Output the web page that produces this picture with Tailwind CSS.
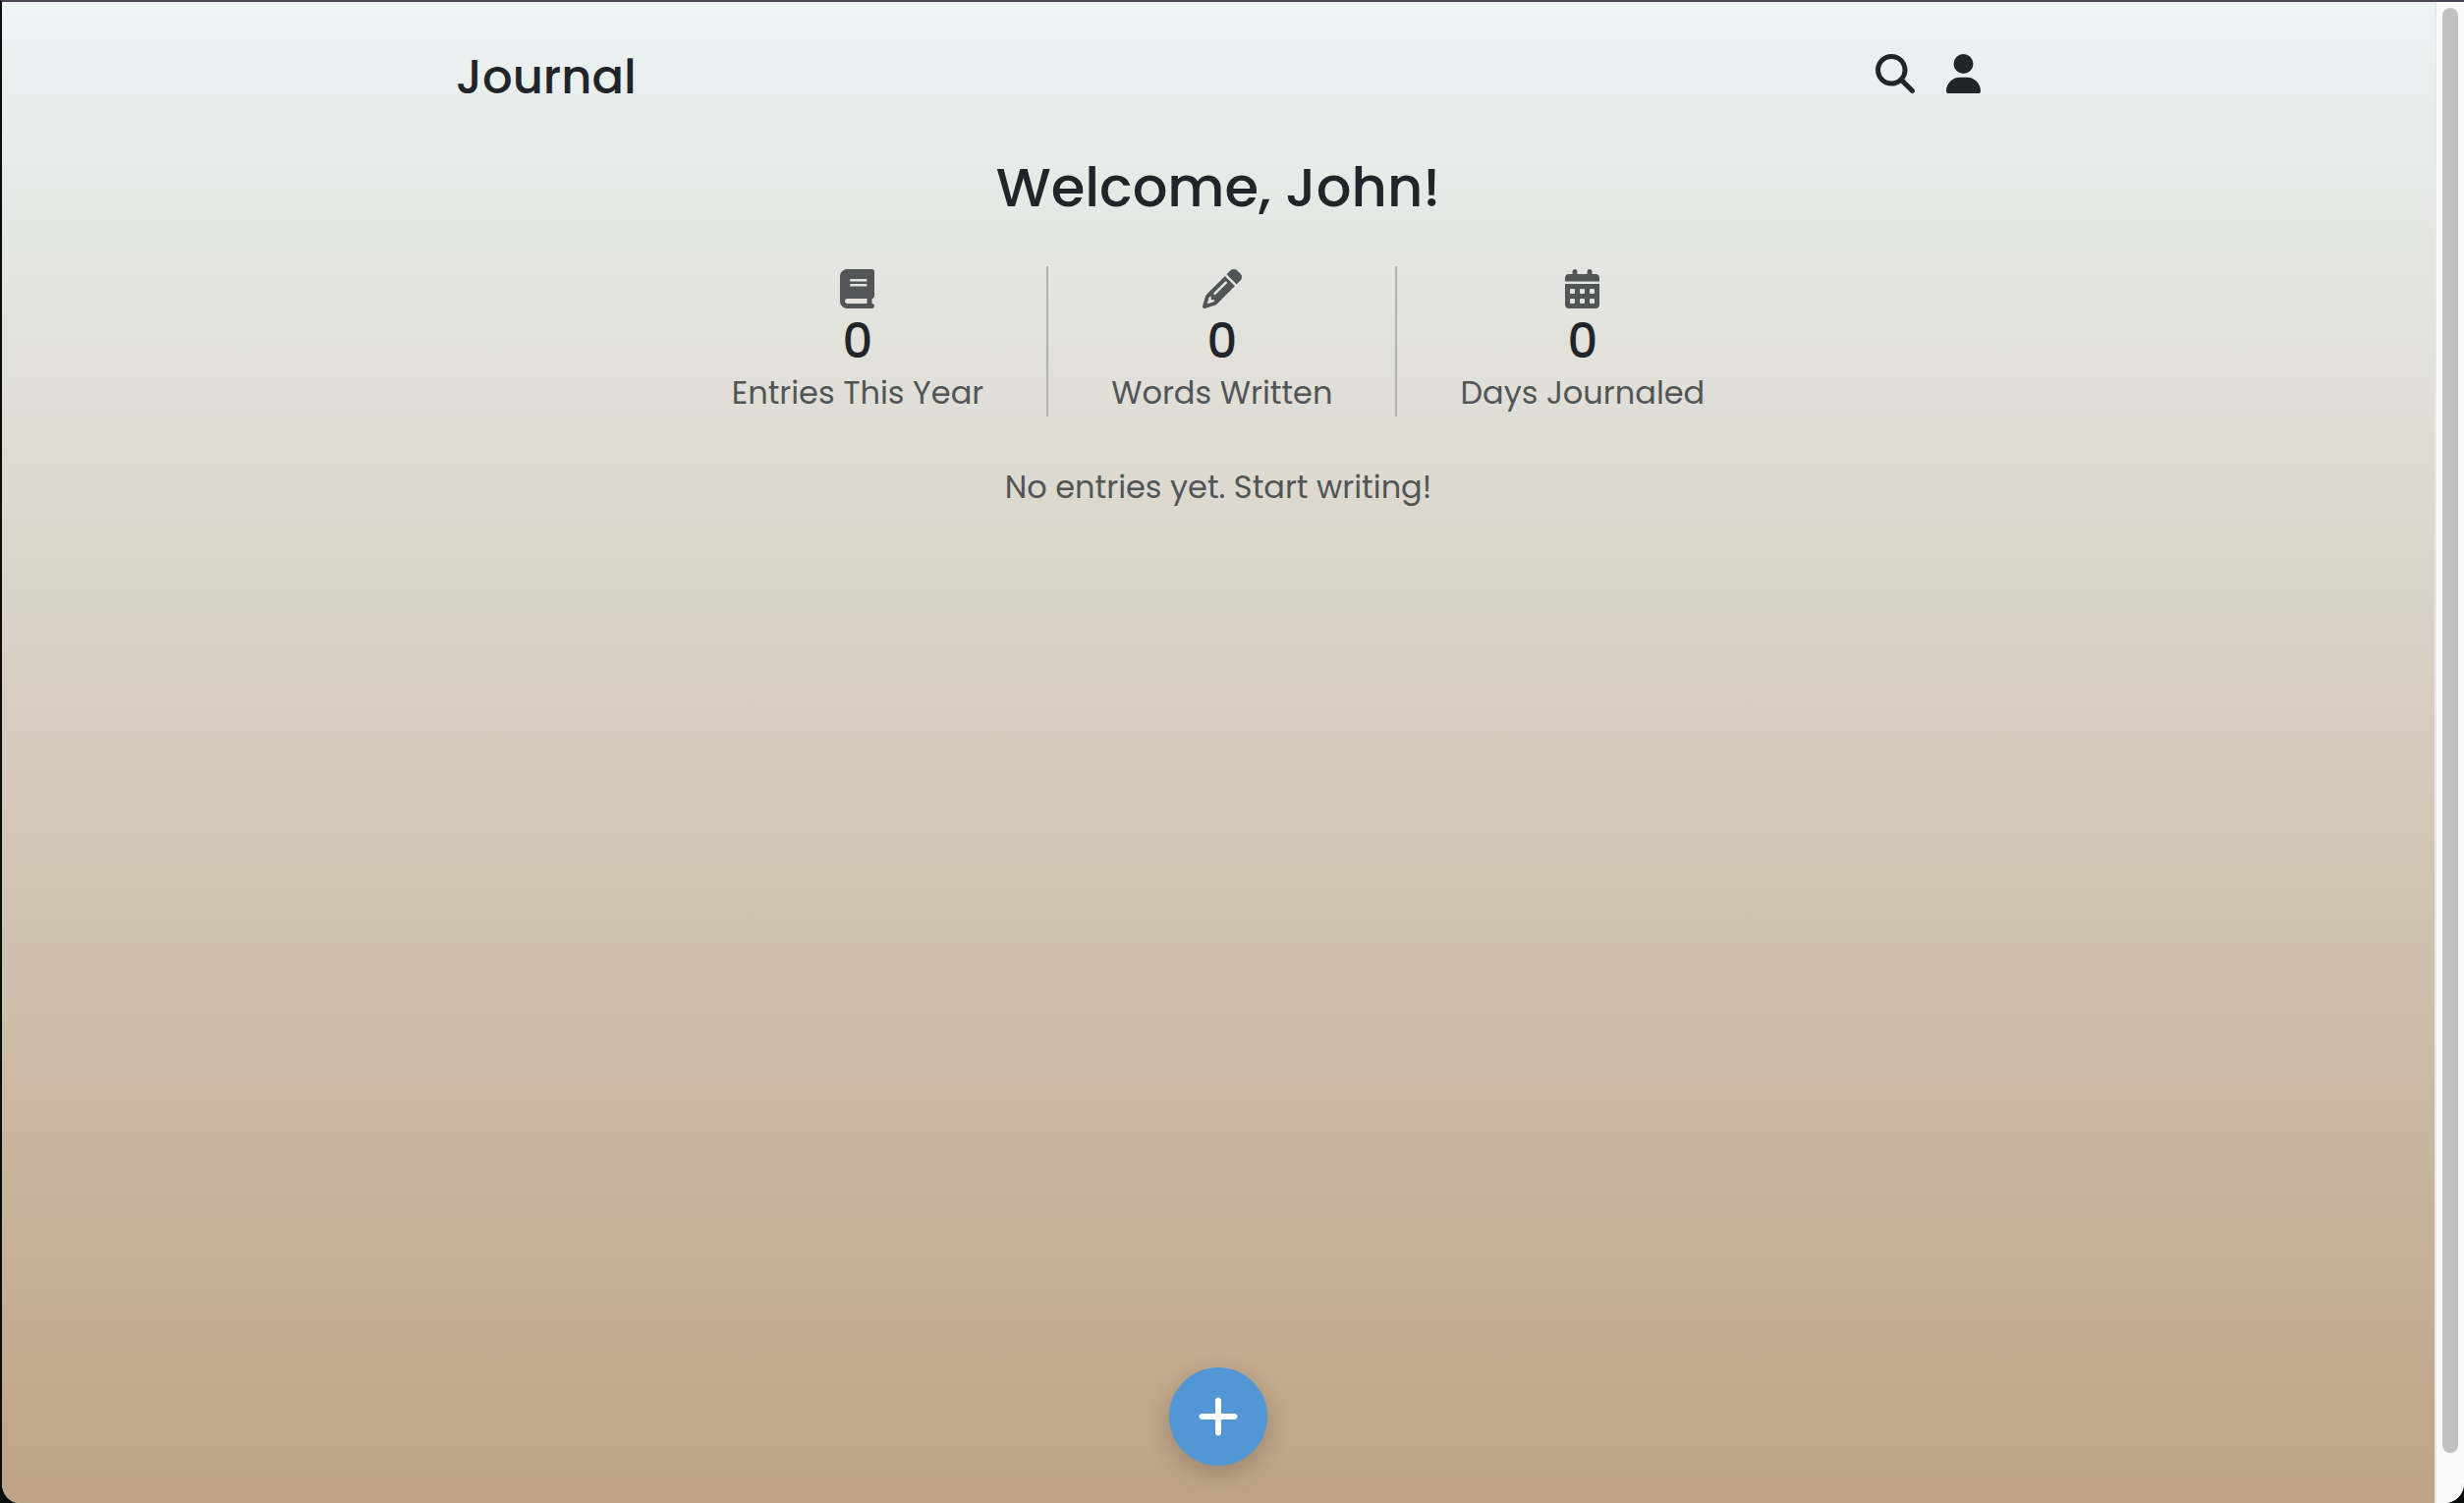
<!DOCTYPE html>
<html lang="en">
<head>
<meta charset="utf-8">
<meta name="viewport" content="width=device-width, initial-scale=1">
<title>Journal</title>
<script src="https://cdn.jsdelivr.net/npm/@tailwindcss/browser@4"></script>
</head>
<body class="bg-[#0b0d0d] font-['Poppins','Inter',sans-serif] text-[#212529]">
<div class="flex min-h-screen overflow-hidden rounded-b-[20px] border-t-2 border-l-2 border-t-[#484650] border-l-[#0b0d0d] bg-[#fafafa]">
  <div class="flex flex-1 flex-col items-center bg-linear-to-b from-[#ecf4f5] to-[#bea386]">
    <header class="flex w-full max-w-[1552px] items-center justify-between pt-[37px]">
      <a href="#" class="text-[48px] leading-[80px] font-medium">Journal</a>
      <nav class="-mt-2 flex items-center gap-8">
        <button type="button" aria-label="Search">
          <svg class="size-10" viewBox="0 0 512 512" fill="currentColor"><path d="M416 208c0 45.900-14.900 88.300-40 122.700L502.600 457.400c12.500 12.500 12.500 32.800 0 45.300s-32.800 12.500-45.300 0L330.700 376c-34.400 25.200-76.800 40-122.700 40C93.100 416 0 322.900 0 208S93.100 0 208 0S416 93.100 416 208zM208 352a144 144 0 1 0 0-288 144 144 0 1 0 0 288z"/></svg>
        </button>
        <button type="button" aria-label="Account">
          <svg class="h-10 w-[35px]" viewBox="0 0 448 512" fill="currentColor"><path d="M224 256A128 128 0 1 0 224 0a128 128 0 1 0 0 256zm-45.700 48C79.800 304 0 383.800 0 482.300C0 498.700 13.300 512 29.700 512H418.300c16.400 0 29.700-13.300 29.700-29.700C448 383.800 368.200 304 269.700 304H178.300z"/></svg>
        </button>
      </nav>
    </header>
    <main class="flex w-full flex-1 flex-col items-center">
      <h1 class="mt-8 text-[56px] leading-[80px] font-medium">Welcome, John!</h1>
      <section class="mt-10 flex text-center" aria-label="Statistics">
        <div class="flex h-[153px] flex-col items-center border-r-2 border-[#b1b1ad] px-16 pt-[3px]">
          <svg class="h-10 w-[35px] shrink-0 text-[#515556]" viewBox="0 0 448 512" fill="currentColor"><path d="M96 0C43 0 0 43 0 96V416c0 53 43 96 96 96H384h32c17.700 0 32-14.300 32-32s-14.300-32-32-32V384c17.700 0 32-14.300 32-32V32c0-17.700-14.300-32-32-32H384 96zm0 384H352v64H96c-17.700 0-32-14.300-32-32s14.300-32 32-32zm32-240c0-8.800 7.200-16 16-16H336c8.800 0 16 7.200 16 16s-7.200 16-16 16H144c-8.800 0-16-7.200-16-16zm16 48H336c8.800 0 16 7.200 16 16s-7.200 16-16 16H144c-8.800 0-16-7.200-16-16s7.200-16 16-16z"/></svg>
          <strong class="mt-1.5 text-[48px] leading-[56px] font-medium">0</strong>
          <span class="text-[32px] leading-[48px] text-[#515556]">Entries This Year</span>
        </div>
        <div class="flex h-[153px] flex-col items-center border-r-2 border-[#b1b1ad] px-16 pt-[3px]">
          <svg class="size-10 shrink-0 text-[#515556]" viewBox="0 0 512 512" fill="currentColor"><path d="M410.300 231l11.300-11.300-33.900-33.900-62.100-62.100L291.700 89.800l-11.300 11.300-22.600 22.600L58.600 322.900c-10.400 10.400-18 23.300-22.200 37.400L1 480.700c-2.500 8.400-.2 17.500 6.100 23.700s15.300 8.500 23.700 6.100l120.300-35.400c14.100-4.200 27-11.800 37.400-22.200L387.700 253.700 410.300 231zM160 399.400l-9.100 22.700c-4 3.100-8.500 5.400-13.300 6.900L59.400 452l23-78.100c1.400-4.900 3.800-9.400 6.900-13.300l22.700-9.100v32c0 8.800 7.200 16 16 16h32zM362.700 18.700L348.300 33.200 325.700 55.800 314.300 67.100l33.900 33.900 62.100 62.100 33.900 33.900 11.300-11.300 22.600-22.600 14.500-14.500c25-25 25-65.500 0-90.500L453.300 18.700c-25-25-65.500-25-90.500 0zm-47.400 168l-144 144c-6.200 6.200-16.400 6.200-22.600 0s-6.200-16.400 0-22.600l144-144c6.200-6.200 16.400-6.200 22.600 0s6.200 16.400 0 22.600z"/></svg>
          <strong class="mt-1.5 text-[48px] leading-[56px] font-medium">0</strong>
          <span class="text-[32px] leading-[48px] text-[#515556]">Words Written</span>
        </div>
        <div class="flex h-[153px] flex-col items-center px-16 pt-[3px]">
          <svg class="h-10 w-[35px] shrink-0 text-[#515556]" viewBox="0 0 448 512" fill="currentColor" fill-rule="evenodd"><path d="M128 0c17.700 0 32 14.300 32 32V64H288V32c0-17.700 14.300-32 32-32s32 14.300 32 32V64h48c26.500 0 48 21.500 48 48v48H0V112C0 85.500 21.500 64 48 64H96V32c0-17.700 14.300-32 32-32zM0 192H448V464c0 26.500-21.500 48-48 48H48c-26.500 0-48-21.500-48-48V192zm64 80v32c0 8.800 7.200 16 16 16h32c8.800 0 16-7.200 16-16v-32c0-8.800-7.200-16-16-16H80c-8.800 0-16 7.200-16 16zm128 0v32c0 8.800 7.200 16 16 16h32c8.800 0 16-7.200 16-16v-32c0-8.800-7.200-16-16-16h-32c-8.800 0-16 7.200-16 16zm128 0v32c0 8.800 7.200 16 16 16h32c8.800 0 16-7.200 16-16v-32c0-8.800-7.200-16-16-16h-32c-8.800 0-16 7.200-16 16zM64 400v32c0 8.800 7.200 16 16 16h32c8.800 0 16-7.200 16-16v-32c0-8.800-7.200-16-16-16H80c-8.800 0-16 7.200-16 16zm128 0v32c0 8.800 7.200 16 16 16h32c8.800 0 16-7.200 16-16v-32c0-8.800-7.200-16-16-16h-32c-8.800 0-16 7.200-16 16zm128 0v32c0 8.800 7.200 16 16 16h32c8.800 0 16-7.200 16-16v-32c0-8.800-7.200-16-16-16h-32c-8.800 0-16 7.200-16 16z"/></svg>
          <strong class="mt-1.5 text-[48px] leading-[56px] font-medium">0</strong>
          <span class="text-[32px] leading-[48px] text-[#515556]">Days Journaled</span>
        </div>
      </section>
      <p class="mt-12 text-[32px] leading-[48px] text-[#515556]">No entries yet. Start writing!</p>
    </main>
    <footer class="flex w-full justify-center pb-[38px]">
      <button type="button" aria-label="New entry" class="flex size-[100px] items-center justify-center rounded-full bg-[#5296d6] text-white shadow-[0_8px_24px_rgba(0,0,0,0.2)]">
        <svg class="h-12 w-[42px]" viewBox="0 0 448 512" fill="currentColor"><path d="M256 80c0-17.700-14.300-32-32-32s-32 14.300-32 32V224H48c-17.700 0-32 14.300-32 32s14.300 32 32 32H192V432c0 17.700 14.300 32 32 32s32-14.300 32-32V288H400c17.700 0 32-14.300 32-32s-14.300-32-32-32H256V80z"/></svg>
      </button>
    </footer>
  </div>
  <div class="flex w-[30px] justify-center border-l-2 border-[#e8e8e8] bg-[#fafafa] pt-1.5 pb-[51px]">
    <div class="w-4 rounded-full bg-[#c1c1c1]"></div>
  </div>
</div>
</body>
</html>
